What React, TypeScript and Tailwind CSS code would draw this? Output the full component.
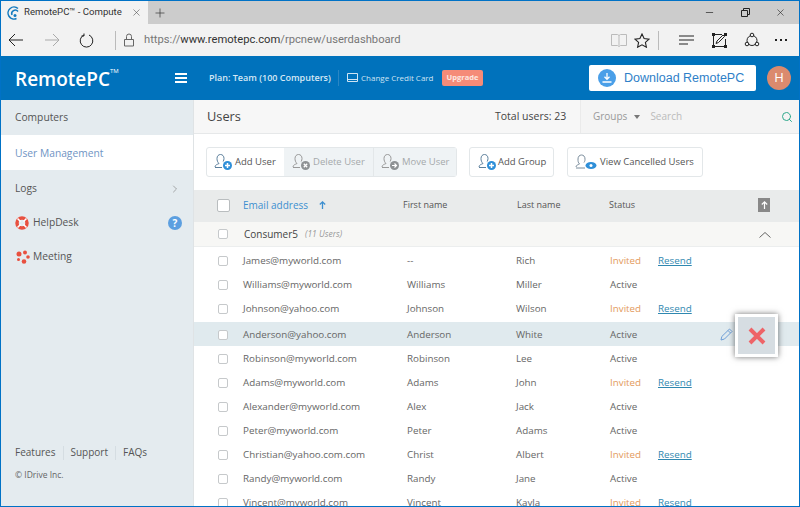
import { ChevronRight, Minus, Plus, Search, X } from 'lucide-react';

const users = [
  ['James@myworld.com', '--', 'Rich', 'Invited'],
  ['Williams@myworld.com', 'Williams', 'Miller', 'Active'],
  ['Johnson@yahoo.com', 'Johnson', 'Wilson', 'Invited'],
  ['Anderson@yahoo.com', 'Anderson', 'White', 'Active'],
  ['Robinson@myworld.com', 'Robinson', 'Lee', 'Active'],
  ['Adams@myworld.com', 'Adams', 'John', 'Invited'],
  ['Alexander@myworld.com', 'Alex', 'Jack', 'Active'],
  ['Peter@myworld.com', 'Peter', 'Adams', 'Active'],
  ['Christian@yahoo.com.com', 'Christ', 'Albert', 'Invited'],
  ['Randy@myworld.com', 'Randy', 'Jane', 'Active'],
  ['Vincent@myworld.com', 'Vincent', 'Kayla', 'Invited'],
];

function UserIcon({ color, badge }: { color: string; badge: 'plus' | 'x' | 'arrow' }) {
  return (
    <svg width="20" height="18" viewBox="0 0 20 18" fill="none" className="shrink-0">
      <path d="M1 14c0-2 2-2.500 4-3.500-1.500-1.500-2-3-2-5C3 3 4.500 1.500 6.500 1.500S10 3 10 5.500c0 1-.3 2-.8 3M1 14.500h7" stroke={color} strokeWidth="1" />
      <circle cx="13.500" cy="12.500" r="4.500" fill={badge === 'plus' ? '#2f8fd8' : '#8e9294'} />
      {badge === 'plus' && <path d="M13.500 10v5M11 12.500h5" stroke="#fff" strokeWidth="1.500" />}
      {badge === 'x' && <path d="M11.800 10.800l3.400 3.400M15.200 10.800l-3.400 3.400" stroke="#fff" strokeWidth="1.300" />}
      {badge === 'arrow' && <path d="M11 12.500h4.500M13.500 10.500l2 2-2 2" stroke="#fff" strokeWidth="1.200" />}
    </svg>
  );
}

function Browser() {
  return (
    <>
      <div className="flex h-[23px] shrink-0 bg-[#cccccc] [font-family:Roboto,sans-serif]">
        <div className="flex w-[147px] shrink-0 items-center bg-[#f2f2f2] pl-[4px]">
          <svg width="14" height="14" viewBox="0 0 14 14" fill="none" stroke="#1279be" strokeWidth="1.500" className="shrink-0">
            <path d="M13 2.500A6 6 0 1 0 11.500 12.500" />
            <path d="M13 5.500A3.500 3.500 0 0 0 7 9" />
            <circle cx="10" cy="9.500" r="1.500" fill="#1279be" stroke="none" />
          </svg>
          <span className="ml-[5px] w-[104px] shrink-0 whitespace-nowrap text-[9.600px] text-[#333]">RemotePC™ - Compute</span>
          <X size={11} strokeWidth={1.2} className="ml-[3px] shrink-0 text-[#444]" />
        </div>
        <Plus size={14} strokeWidth={1.2} className="ml-[5px] mt-[5px] text-[#333]" />
        <div className="ml-auto flex items-center text-[#222]">
          <Minus size={11} strokeWidth={1.5} className="mr-[26px]" />
          <svg width="9" height="9" viewBox="0 0 9 9" fill="none" stroke="#222" className="mr-[25px]">
            <path d="M.5 2.500h6v6h-6zM2.500 2.500v-2h6v6h-2" />
          </svg>
          <X size={11} strokeWidth={1.3} className="mr-[13px]" />
        </div>
      </div>
      <div className="flex h-[32px] shrink-0 items-center bg-[#f2f2f2] text-[#222]">
        <svg width="16" height="14" viewBox="0 0 16 14" fill="none" stroke="#222" className="ml-[7px] shrink-0">
          <path d="M15 7H1M7 1 1 7l6 6" />
        </svg>
        <svg width="16" height="14" viewBox="0 0 16 14" fill="none" stroke="#aaa" className="ml-[20px] shrink-0">
          <path d="M1 7h14M9 1l6 6-6 6" />
        </svg>
        <svg width="15" height="15" viewBox="0 0 15 15" fill="none" stroke="#222" className="ml-[19px] shrink-0">
          <path d="M5 2a6.300 6.300 0 1 0 5 0M5 .5V3H2.500" />
        </svg>
        <div className="ml-[21px] h-[19px] w-px shrink-0 bg-[#bbb]" />
        <svg width="12" height="14" viewBox="0 0 12 14" fill="none" stroke="#666" className="ml-[7px] shrink-0">
          <path d="M1.500 6.500h9v6.500h-9zM3.500 6.500V3.500a2.500 2.500 0 0 1 5 0v3" />
        </svg>
        <div className="ml-[9px] w-[467px] shrink-0 whitespace-nowrap text-[11.200px] text-[#777] [font-family:Roboto,sans-serif]">
          https://<span className="text-[#333]">www.remotepc.com</span>/rpcnew/userdashboard
        </div>
        <svg width="16" height="14" viewBox="0 0 16 14" fill="none" stroke="#bbb" className="shrink-0">
          <path d="M.5 1.500h6l1.500 1 1.500-1h6v11h-6l-1.500 1-1.500-1h-6zM8 2.500v10" />
        </svg>
        <svg width="16" height="15" viewBox="0 0 16 15" fill="none" stroke="#222" strokeWidth="1.100" className="ml-[7px] shrink-0">
          <path d="m8 1 2.100 4.500 4.900.6-3.600 3.300 1 4.800L8 11.800l-4.400 2.400 1-4.800L1 6.100l4.900-.6z" />
        </svg>
        <div className="ml-[8px] h-[19px] w-px shrink-0 bg-[#bbb]" />
        <svg width="16" height="10" viewBox="0 0 16 10" stroke="#222" className="ml-[20px] shrink-0">
          <path d="M0 1h15M0 5h15M0 9h9" />
        </svg>
        <svg width="15" height="15" viewBox="0 0 15 15" fill="none" stroke="#222" className="ml-[17px] shrink-0">
          <path d="M1.500 2v11M13.500 6v7M3 1.500h7M3 13.500h9M4 10.500l1-2.500 6-6 1.500 1.500-6 6z" />
          <path d="M0 0h3v3H0zM12 0h3v3h-3zM0 12h3v3H0zM12 12h3v3h-3z" fill="#222" stroke="none" />
        </svg>
        <svg width="16" height="16" viewBox="0 0 16 16" fill="none" stroke="#222" className="ml-[17px] shrink-0">
          <circle cx="8" cy="8.500" r="5" />
          <circle cx="8" cy="3" r="1.800" fill="#f2f2f2" />
          <circle cx="3" cy="12" r="1.800" fill="#f2f2f2" />
          <circle cx="13" cy="12" r="1.800" fill="#f2f2f2" />
        </svg>
        <div className="ml-[15px] flex shrink-0 gap-[3px]">
          <span className="h-[2px] w-[2px] bg-[#222]" />
          <span className="h-[2px] w-[2px] bg-[#222]" />
          <span className="h-[2px] w-[2px] bg-[#222]" />
        </div>
      </div>
    </>
  );
}

function Header() {
  return (
    <div className="flex h-[44px] shrink-0 items-center bg-[#0072bc] text-white">
      <div className="ml-[14px] mt-[3px] flex w-[160px] shrink-0 items-start text-[19px] font-semibold">
        RemotePC<span className="mt-[2px] text-[6px] font-normal">TM</span>
      </div>
      <div className="flex w-[12px] shrink-0 flex-col gap-[2px]">
        <span className="h-[2px] bg-white" />
        <span className="h-[2px] bg-white" />
        <span className="h-[2px] bg-white" />
      </div>
      <span className="ml-[22px] w-[125px] shrink-0 whitespace-nowrap text-[9px] font-semibold text-[#d5e8f5]">Plan: Team (100 Computers)</span>
      <div className="ml-[4px] h-[16px] w-px shrink-0 bg-[#2a86c4]" />
      <svg width="11" height="10" viewBox="0 0 11 10" fill="none" stroke="#cfe4f3" className="ml-[8px] shrink-0">
        <path d="M.5.500h10v8H.5zM.5 6.500h10" />
      </svg>
      <span className="ml-[3px] w-[76px] shrink-0 whitespace-nowrap text-[8px] text-[#cfe4f3]">Change Credit Card</span>
      <span className="ml-[5px] flex h-[16px] w-[41px] shrink-0 items-center justify-center rounded-[2px] bg-[#f58b78] text-[7.500px] font-bold text-[#fde8e2]">Upgrade</span>
      <div className="ml-[106px] flex h-[26px] w-[167px] shrink-0 items-center rounded-[2px] bg-white pl-[9px]">
        <div className="flex h-[18px] w-[18px] shrink-0 items-center justify-center rounded-full bg-[#4a9fe8]">
          <svg width="10" height="10" viewBox="0 0 10 10" fill="none" stroke="#fff" strokeWidth="1.300">
            <path d="M5 0v6M2.500 3.800 5 6.300l2.500-2.500M.5 9h9" />
          </svg>
        </div>
        <span className="ml-[8px] whitespace-nowrap text-[12.500px] text-[#2f80c8] [font-family:'Liberation_Sans',sans-serif]">Download RemotePC</span>
      </div>
      <div className="ml-[11px] flex h-[24px] w-[24px] shrink-0 items-center justify-center rounded-full bg-[#db8a6e] text-[13px]">H</div>
    </div>
  );
}

function Sidebar() {
  return (
    <div className="flex w-[192px] shrink-0 flex-col bg-[#e4ebef] text-[10.250px] text-[#555]">
      <div className="flex h-[35px] items-center pl-[14px]">Computers</div>
      <div className="flex h-[35px] items-center bg-white pl-[14px] pt-[2px] text-[#6f94c4]">User Management</div>
      <div className="flex h-[35px] items-center justify-between pl-[14px] pr-[12px] pt-[2px]">
        Logs
        <ChevronRight size={12} strokeWidth={1.2} className="text-[#777]" />
      </div>
      <div className="flex h-[34px] items-center pl-[14px] pr-[11px] pt-[2px]">
        <svg width="14" height="14" viewBox="0 0 14 14" fill="none" className="shrink-0">
          <circle cx="7" cy="7" r="5" stroke="#e8503f" strokeWidth="3.500" />
          <path d="M2.500 2.500l3 3M11.500 2.500l-3 3M2.500 11.500l3-3M11.500 11.500l-3-3" stroke="#fff" strokeWidth="1.500" />
        </svg>
        <span className="ml-[4px]">HelpDesk</span>
        <span className="ml-auto flex h-[14px] w-[14px] items-center justify-center rounded-full bg-[#5c9fe0] text-[10px] font-bold text-white">?</span>
      </div>
      <div className="flex h-[33px] items-center pl-[15px] pt-[2px]">
        <svg width="14" height="14" viewBox="0 0 14 14" fill="#e8503f" className="shrink-0">
          <circle cx="3" cy="4" r="2.500" />
          <circle cx="9" cy="2.500" r="2" />
          <circle cx="12" cy="7" r="1.800" />
          <circle cx="8" cy="11.500" r="2.300" />
          <circle cx="2.500" cy="9.500" r="1.500" />
        </svg>
        <span className="ml-[3px]">Meeting</span>
      </div>
      <div className="mt-auto pb-[24px] pl-[14px]">
        <div className="flex items-center text-[10px]">
          <span>Features</span>
          <span className="mx-[7px] h-[14px] w-px bg-[#d5dde2]" />
          <span>Support</span>
          <span className="mx-[7px] h-[14px] w-px bg-[#d5dde2]" />
          <span>FAQs</span>
        </div>
        <div className="mt-[9px] text-[8.500px] text-[#666]">© IDrive Inc.</div>
      </div>
    </div>
  );
}

function Toolbar() {
  return (
    <div className="flex h-[56px] shrink-0 items-center bg-white pl-[12px] text-[9.500px]">
      <div className="flex h-[30px] w-[251px] shrink-0 rounded-[3px] border border-[#e3e7e9]">
        <div className="flex w-[77px] shrink-0 items-center pl-[7px] text-[#555]">
          <UserIcon color="#5c7f9c" badge="plus" />
          <span className="ml-[1px] whitespace-nowrap">Add User</span>
        </div>
        <div className="flex w-[89px] shrink-0 items-center bg-[#eff3f5] pl-[8px] text-[#a5a9ab]">
          <UserIcon color="#999" badge="x" />
          <span className="ml-[1px] whitespace-nowrap">Delete User</span>
        </div>
        <div className="flex flex-1 items-center border-l border-[#e3e7e9] bg-[#eff3f5] pl-[7px] text-[#a5a9ab]">
          <UserIcon color="#999" badge="arrow" />
          <span className="ml-[1px] whitespace-nowrap">Move User</span>
        </div>
      </div>
      <div className="ml-[12px] flex h-[30px] w-[85px] shrink-0 items-center rounded-[3px] border border-[#e3e7e9] pl-[8px] text-[#555]">
        <UserIcon color="#5c7f9c" badge="plus" />
        <span className="whitespace-nowrap">Add Group</span>
      </div>
      <div className="ml-[13px] flex h-[30px] w-[136px] shrink-0 items-center rounded-[3px] border border-[#e3e7e9] pl-[7px] text-[#555]">
        <svg width="22" height="16" viewBox="0 0 22 16" fill="none" className="shrink-0">
          <path d="M1 13c0-2 2-2 3.500-3C3 8.500 3 7 3 5 3 2.500 4.500 1 6.500 1S10 2.500 10 5c0 1 0 2-1 3.500M1 14h9" stroke="#7b8d9c" />
          <ellipse cx="16" cy="11.500" rx="5.500" ry="3.500" fill="#2f8fd8" />
          <circle cx="16" cy="11.500" r="1.500" fill="#fff" />
        </svg>
        <span className="ml-[3px] whitespace-nowrap">View Cancelled Users</span>
      </div>
    </div>
  );
}

function Checkbox({ big }: { big?: boolean }) {
  return (
    <span
      className={
        big
          ? 'h-[13px] w-[13px] rounded-[2px] border border-[#b9bdbf] bg-white'
          : 'h-[10px] w-[10px] rounded-[2px] border border-[#c6c9cb] bg-white'
      }
    />
  );
}

function Row({ user, index }: { user: string[]; index: number }) {
  const active = index === 3;
  return (
    <div
      className={`relative flex h-[24px] shrink-0 items-center pt-[2px] text-[9.800px] text-[#666] ${index === 2 ? 'mb-[2px]' : ''} ${
        active ? 'bg-[#e0eaee]' : ''
      }`}
    >
      <div className="ml-[24px] flex w-[25px] shrink-0">
        <Checkbox />
      </div>
      <span className="w-[164px] shrink-0 whitespace-nowrap">{user[0]}</span>
      <span className="w-[109px] shrink-0">{user[1]}</span>
      <span className="w-[94px] shrink-0">{user[2]}</span>
      <span className={`w-[48px] shrink-0 ${user[3] === 'Invited' ? 'text-[#e39a5d]' : ''}`}>{user[3]}</span>
      {user[3] === 'Invited' && <span className="text-[#2f88b0] underline">Resend</span>}
      {active && (
        <>
          <svg width="13" height="13" viewBox="0 0 13 13" fill="none" stroke="#6f9fd8" className="absolute left-[526px] top-[6px]">
            <path d="M1 12l.8-3.500L9.500 1 12 3.500 4.500 11zM8 2.500 10.500 5" />
          </svg>
          <div className="absolute left-[541px] top-[-8px] z-10 flex h-[43px] w-[43px] items-center justify-center border-[3px] border-white bg-[#d6dde2] shadow-[0_0_6px_rgba(0,0,0,0.55)]">
            <svg width="18" height="18" viewBox="0 0 18 18" stroke="#ee6468" strokeWidth="4">
              <path d="M2 2l14 14M16 2 2 16" />
            </svg>
          </div>
        </>
      )}
    </div>
  );
}

export default function App() {
  return (
    <div className="flex h-[507px] w-[800px] flex-col overflow-hidden border border-[#0072c6] bg-white [font-family:'Open_Sans',sans-serif]">
      <Browser />
      <Header />
      <div className="flex min-h-0 flex-1">
        <Sidebar />
        <div className="flex min-w-0 flex-1 flex-col border-l border-[#dfe3e5]">
          <div className="flex h-[34px] shrink-0 items-center border-b border-[#e6e8e9] bg-[#f7f7f7]">
            <span className="ml-[13px] w-[288px] shrink-0 text-[12.800px] text-[#444]">Users</span>
            <span className="w-[85px] shrink-0 whitespace-nowrap text-[10.500px] text-[#444]">Total users: 23</span>
            <div className="flex h-full flex-1 items-center border-l border-[#eaeaea] bg-[#f4f4f4] text-[10px] text-[#999]">
              <span className="ml-[12px]">Groups</span>
              <span className="ml-[7px] h-0 w-0 border-x-[3px] border-t-[4px] border-x-transparent border-t-[#777]" />
              <span className="ml-[10px] text-[#bbb]">Search</span>
              <Search size={12} strokeWidth={2} className="ml-auto mr-[6px] text-[#2fa98c]" />
            </div>
          </div>
          <Toolbar />
          <div className="flex h-[32px] shrink-0 items-center bg-[#e9ebeb] pb-[2px] text-[9px] font-medium text-[#555]">
            <div className="ml-[23px] flex w-[26px] shrink-0">
              <Checkbox big />
            </div>
            <div className="flex w-[160px] shrink-0 items-center text-[10px] font-normal text-[#3d8fd0]">
              Email address
              <svg width="7" height="8" viewBox="0 0 7 8" fill="none" stroke="#3d8fd0" strokeWidth="1.300" className="ml-[11px]">
                <path d="M3.500 8V1M.8 3.500 3.500.9l2.700 2.600" />
              </svg>
            </div>
            <span className="w-[114px] shrink-0">First name</span>
            <span className="w-[92px] shrink-0">Last name</span>
            <span className="w-[149px] shrink-0">Status</span>
            <span className="flex h-[14px] w-[12px] shrink-0 items-center justify-center bg-[#888]">
              <svg width="7" height="8" viewBox="0 0 7 8" fill="none" stroke="#fff" strokeWidth="1.200">
                <path d="M3.500 8V1M.8 3.500 3.500.9l2.700 2.600" />
              </svg>
            </span>
          </div>
          <div className="flex h-[25px] shrink-0 items-center border-b border-[#eceeee] bg-[#f7f7f5] text-[10px] text-[#444]">
            <div className="ml-[24px] flex w-[26px] shrink-0">
              <Checkbox />
            </div>
            <span className="w-[61px] shrink-0">Consumer5</span>
            <i className="w-[454px] shrink-0 text-[8.500px] text-[#999]">(11 Users)</i>
            <svg width="12" height="6" viewBox="0 0 12 6" fill="none" stroke="#666" className="mt-[2px] shrink-0">
              <path d="M.5 5.500 6 .5l5.500 5" />
            </svg>
          </div>
          <div className="flex min-h-0 flex-1 flex-col pt-[1px]">
            {users.map((u, i) => (
              <Row key={u[0]} user={u} index={i} />
            ))}
          </div>
        </div>
      </div>
    </div>
  );
}
